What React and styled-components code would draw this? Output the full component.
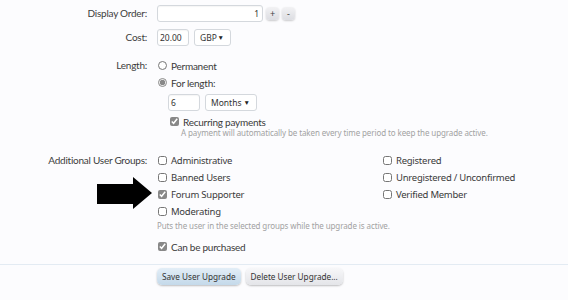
import React from "react";
import styled, { createGlobalStyle } from "styled-components";

const Global = createGlobalStyle`
  html, body { margin: 0; padding: 0; background: #fcfcfe; }
  body { font-family: Lato, "Open Sans", sans-serif; color: #3a3a3a; }
`;

const Page = styled.div`
  position: relative;
  width: 568px;
  height: 300px;
  overflow: hidden;
  padding-top: 5px;
  box-sizing: border-box;
`;

const Row = styled.div`
  display: grid;
  grid-template-columns: 147px 1fr;
  column-gap: 10px;
  align-items: start;
  margin-bottom: ${(p) => p.$mb || 0}px;
`;

const Label = styled.div`
  text-align: right;
  font-size: 10px;
  letter-spacing: -0.25px;
  line-height: 17px;
  color: #3c3c3c;
  white-space: nowrap;
`;

const Controls = styled.div`
  display: flex;
  flex-direction: column;
  align-items: flex-start;
`;

const Inline = styled.div`
  display: flex;
  align-items: center;
  gap: ${(p) => p.$gap || 5}px;
  margin-left: ${(p) => p.$indent || 0}px;
  margin-top: ${(p) => p.$mt || 0}px;
`;

const TextBox = styled.div`
  box-sizing: border-box;
  width: ${(p) => p.$w}px;
  height: 17px;
  border: 1px solid #d4d8dd;
  border-radius: 3px;
  background: #fff;
  box-shadow: inset 0 1px 1px rgba(0,0,0,0.04);
  font-family: "Noto Sans", sans-serif;
  font-size: 8.5px;
  line-height: 15px;
  padding: 0 3px 0 2px;
  color: #333;
  text-align: ${(p) => (p.$right ? "right" : "left")};
`;

const SelectBox = styled.div`
  box-sizing: border-box;
  width: ${(p) => p.$w}px;
  height: 17px;
  border: 1px solid #d4d8dd;
  border-radius: 3px;
  background: #fff;
  font-family: "Noto Sans", sans-serif;
  font-size: 8.5px;
  line-height: 15px;
  padding: 0 6px 0 5px;
  color: #333;
  display: flex;
  justify-content: space-between;
  align-items: center;
  span { font-size: 6.5px; color: #222; }
`;

const Spin = styled.div`
  box-sizing: border-box;
  width: 13px;
  height: 13px;
  border-radius: 4px;
  background: linear-gradient(#f2f2f4, #dcdde2);
  box-shadow: 0 1px 2px rgba(0,0,0,0.2);
  font-size: 9px;
  line-height: 13px;
  text-align: center;
  color: #444;
`;

const Option = styled.label`
  display: flex;
  align-items: center;
  height: 17px;
  font-size: ${(p) => (p.$big ? 10 : 9.5)}px;
  letter-spacing: -0.25px;
  font-family: ${(p) => (p.$big ? "Lato, sans-serif" : "'Noto Sans', sans-serif")};
  color: #3a3a3a;
  margin-left: ${(p) => p.$indent || 0}px;
  margin-top: ${(p) => p.$mt || 0}px;
  white-space: nowrap;
  input {
    margin: 0 4px 0 1px;
    width: 9px;
    height: 9px;
    accent-color: #888;
  }
`;

const Hint = styled.div`
  font-family: "Noto Sans", sans-serif;
  font-size: 8px;
  letter-spacing: -0.1px;
  color: #a2a2a2;
  line-height: 11px;
  margin-left: ${(p) => p.$indent || 0}px;
  margin-top: ${(p) => p.$mt || 0}px;
  white-space: nowrap;
`;

const Columns = styled.div`
  display: grid;
  grid-template-columns: 225px 1fr;
`;

const Col = styled.div`
  display: flex;
  flex-direction: column;
`;

const Divider = styled.div`
  height: 1px;
  background: #e3ebf3;
  margin-top: 9px;
`;

const Buttons = styled.div`
  display: flex;
  gap: 5px;
  padding: 3px 0 0 157px;
`;

const Button = styled.button`
  height: 17px;
  padding: 0 5px;
  border: none;
  border-radius: 5px;
  font-family: "Noto Sans", sans-serif;
  font-size: 8.2px;
  color: #333;
  background: ${(p) =>
    p.$primary
      ? "linear-gradient(#e3eef7, #c4d9ea)"
      : "linear-gradient(#f7f7f9, #e4e5e9)"};
  box-shadow: 0 1px 2px rgba(0,0,0,0.25);
`;

const Arrow = styled.svg`
  position: absolute;
  left: 97px;
  top: 177px;
`;

export default function App() {
  return (
    <Page>
      <Global />
      <Row $mb={7}>
        <Label>Display Order:</Label>
        <Inline $gap={3}>
          <TextBox $w={106} $right>1</TextBox>
          <Spin>+</Spin>
          <Spin>-</Spin>
        </Inline>
      </Row>
      <Row $mb={11}>
        <Label>Cost:</Label>
        <Inline>
          <TextBox $w={32}>20.00</TextBox>
          <SelectBox $w={37}>GBP <span>▼</span></SelectBox>
        </Inline>
      </Row>
      <Row $mb={14}>
        <Label>Length:</Label>
        <Controls>
          <Option $big><input type="radio" name="len" readOnly />Permanent</Option>
          <Option $big><input type="radio" name="len" defaultChecked />For length:</Option>
          <Inline $indent={11} $mt={3}>
            <TextBox $w={32}>6</TextBox>
            <SelectBox $w={52}>Months <span>▼</span></SelectBox>
          </Inline>
          <Option $big $indent={12} $mt={2}>
            <input type="checkbox" defaultChecked />Recurring payments
          </Option>
          <Hint $indent={24} $mt={-3}>
            A payment will automatically be taken every time period to keep the upgrade active.
          </Hint>
        </Controls>
      </Row>
      <Row $mb={7}>
        <Label>Additional User Groups:</Label>
        <Controls>
          <Columns>
            <Col>
              <Option><input type="checkbox" />Administrative</Option>
              <Option><input type="checkbox" />Banned Users</Option>
              <Option><input type="checkbox" defaultChecked />Forum Supporter</Option>
              <Option><input type="checkbox" />Moderating</Option>
            </Col>
            <Col>
              <Option><input type="checkbox" />Registered</Option>
              <Option><input type="checkbox" />Unregistered / Unconfirmed</Option>
              <Option><input type="checkbox" />Verified Member</Option>
            </Col>
          </Columns>
          <Hint $mt={0}>Puts the user in the selected groups while the upgrade is active.</Hint>
        </Controls>
      </Row>
      <Row>
        <div />
        <Option $big><input type="checkbox" defaultChecked />Can be purchased</Option>
      </Row>
      <Divider />
      <Buttons>
        <Button $primary>Save User Upgrade</Button>
        <Button>Delete User Upgrade...</Button>
      </Buttons>
      <Arrow width="56" height="32" viewBox="0 0 56 32">
        <polygon points="0,7 36,7 36,0 55,16 36,32 36,27 0,27" fill="#000" />
      </Arrow>
    </Page>
  );
}
